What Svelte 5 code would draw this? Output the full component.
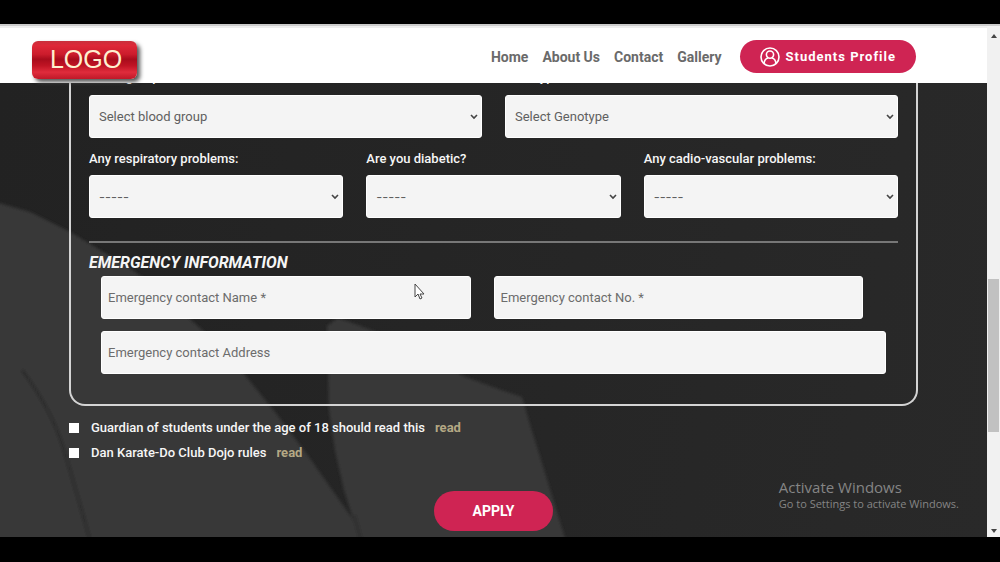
<script>
  const nav = ['Home', 'About Us', 'Contact', 'Gallery'];
  const medical = [
    { id: 'respiratory', label: 'Any respiratory problems:' },
    { id: 'diabetic', label: 'Are you diabetic?' },
    { id: 'cardio', label: 'Any cadio-vascular problems:' }
  ];
  const consents = [
    { id: 'guardian', text: 'Guardian of students under the age of 18 should read this' },
    { id: 'rules', text: 'Dan Karate-Do Club Dojo rules' }
  ];
</script>

<div class="screen">
  <div class="window">
    <div class="page">
      <header>
        <a class="logo" href="#home">LOGO</a>
        <nav>
          {#each nav as item}
            <a href="#{item}">{item}</a>
          {/each}
          <a class="profile" href="#profile">
            <svg viewBox="0 0 20 20" width="20" height="20" fill="none" stroke="#fff" stroke-width="1.6">
              <circle cx="10" cy="10" r="9" />
              <circle cx="10" cy="7.6" r="3.6" />
              <path d="M4 16.6c.4-3.400 2-5.200 4-5.600M16 16.600c-.4-3.400-2-5.200-4-5.600" />
            </svg>
            <span>Students Profile</span>
          </a>
        </nav>
      </header>

      <main>
        <svg class="backdrop" viewBox="0 83 987 454" preserveAspectRatio="none" aria-hidden="true">
          <defs>
            <filter id="soft"><feGaussianBlur stdDeviation="1.5" /></filter>
          </defs>
          <g filter="url(#soft)">
            <path fill="#383838" d="M-5 202 30 212 70 232 128 267 165 293 193 322 225 350 253 385 275 412 306 453 354 521 362 545H-5z" />
            <path fill="#383838" d="M327 326 338 318 355 324 410 345 463 376 498 389 522 397 530 425 541 460 567 545H361L354 521 344 490 335 450 329 410z" />
            <path fill="none" stroke="#2f2f2f" stroke-width="4" d="M22 370Q52 410 64 450T90 540" />
            <path fill="none" stroke="#303030" stroke-width="5" d="M354 515 361 540" />
          </g>
        </svg>

        <form onsubmit={(e) => e.preventDefault()}>
          <div class="card">
            <div class="cols two">
              <div class="field first">
                <label for="blood">Blood group:</label>
                <select id="blood"><option>Select blood group</option></select>
              </div>
              <div class="field first">
                <label for="genotype">Genotype:</label>
                <select id="genotype"><option>Select Genotype</option></select>
              </div>
            </div>
            <div class="cols three">
              {#each medical as m}
                <div class="field">
                  <label for={m.id}>{m.label}</label>
                  <select id={m.id} class="unset"><option>-----</option></select>
                </div>
              {/each}
            </div>
            <hr />
            <h2>EMERGENCY INFORMATION</h2>
            <div class="emergency">
              <div class="cols two contact">
                <input type="text" aria-label="Emergency contact Name" placeholder="Emergency contact Name *" />
                <input type="tel" aria-label="Emergency contact No." placeholder="Emergency contact No. *" />
              </div>
              <input type="text" aria-label="Emergency contact Address" placeholder="Emergency contact Address" />
            </div>
          </div>

          <div class="consents">
            {#each consents as c}
              <div class="consent">
                <input type="checkbox" id={c.id} />
                <label for={c.id}>{c.text}</label>
                <a href="#{c.id}">read</a>
              </div>
            {/each}
          </div>
          <button type="submit">APPLY</button>
        </form>
      </main>
    </div>

    <div class="scrollbar" aria-hidden="true">
      <svg viewBox="0 0 8 4" width="8" height="4"><path fill="#444" d="M1 4 4 0l3 4z" /></svg>
      <div class="track"><div class="thumb"></div></div>
      <svg viewBox="0 0 8 4" width="8" height="4"><path fill="#444" d="M1 0h6L4 4z" /></svg>
    </div>

    <div class="watermark">
      <p>Activate Windows</p>
      <small>Go to Settings to activate Windows.</small>
    </div>
    <svg class="pointer" viewBox="0 0 12 18" width="12" height="18" aria-hidden="true">
      <path fill="#fff" stroke="#444" d="M1 1v13l3-3 2 5 2-1-2-4h4z" />
    </svg>
  </div>
</div>

<style>
  :global(body) {
    margin: 0;
    background: #000;
  }
  .screen {
    box-sizing: border-box;
    min-height: 100vh;
    padding: 24px 0 25px;
    display: flex;
    background: #000;
    color: #f6f6f6;
    font-family: Roboto, "Open Sans", sans-serif;
    font-size: 13px;
    line-height: 20px;
  }
  .window {
    position: relative;
    flex: 1;
    display: flex;
    border-top: 2px solid #ccc;
    box-sizing: border-box;
  }
  .page {
    flex: 1;
    min-width: 0;
    display: flex;
    flex-direction: column;
  }
  header {
    position: relative;
    z-index: 1;
    box-sizing: border-box;
    height: 57px;
    padding: 2px 71px 0 32px;
    display: flex;
    align-items: center;
    justify-content: space-between;
    background: #fff;
    border-top: 2px solid #eee;
  }
  a {
    text-decoration: none;
  }
  .logo {
    width: 105px;
    height: 38px;
    margin-top: 6px;
    border-radius: 6px;
    background: linear-gradient(#c8303c, #de2838 12%, #cc1c2c 35%, #a80c1c 48%, #c01424 65%, #e02c3c 82%, #c01828);
    box-shadow: 3px 3px 4px #555;
    color: #fff0d0;
    font: 25px/37px "Liberation Sans", sans-serif;
    text-align: center;
    text-indent: 3px;
  }
  nav {
    display: flex;
    align-items: center;
    gap: 14px;
  }
  nav a {
    color: #6a6a6a;
    font-size: 14px;
    font-weight: 700;
  }
  .profile {
    display: flex;
    align-items: center;
    gap: 6px;
    height: 33px;
    margin-left: 4px;
    padding: 0 20px;
    border-radius: 17px;
    background: #cf2453;
    color: #fff;
    font-size: 13px;
    letter-spacing: 1px;
  }
  main {
    position: relative;
    flex: 1;
    overflow: hidden;
    background: linear-gradient(100deg, #222, #292929);
  }
  .backdrop {
    position: absolute;
    inset: 0;
    width: 100%;
    height: 100%;
  }
  form {
    position: relative;
    padding: 0 69px 6px;
    margin-top: -16px;
    display: flex;
    flex-direction: column;
  }
  .card {
    padding: 0 18px 30px;
    border: 2px solid #d4d4d4;
    border-top: 0;
    border-radius: 0 0 16px 16px;
  }
  .cols {
    display: grid;
    gap: 23px;
  }
  .two {
    grid-template-columns: 1fr 1fr;
  }
  .three {
    grid-template-columns: 1fr 1fr 1fr;
    margin-top: 11px;
  }
  .field {
    display: flex;
    flex-direction: column;
    gap: 6px;
  }
  .first {
    gap: 8px;
  }
  label {
    font-weight: 500;
  }
  select,
  input:not([type="checkbox"]) {
    box-sizing: border-box;
    width: 100%;
    height: 43px;
    padding: 0 6px;
    border: 1px solid #fff;
    border-radius: 3px;
    background: #f4f4f4;
    color: #606060;
    font: 13px Roboto, "Open Sans", sans-serif;
  }
  select {
    appearance: none;
    padding: 0 20px 0 9px;
    background: #f4f4f4 url("data:image/svg+xml,%3Csvg xmlns='http://www.w3.org/2000/svg' width='8' height='6' fill='none' stroke='%23444' stroke-width='1.600'%3E%3Cpath d='M1 1l3 3 3-3'/%3E%3C/svg%3E") no-repeat right 3px center;
  }
  select.unset {
    font-family: Inter, sans-serif;
  }
  input::placeholder {
    color: #6c6c6c;
  }
  hr {
    margin: 23px 0 10px;
    border: 0;
    border-top: 2px solid #777;
  }
  h2 {
    margin: 0 0 3px;
    font-size: 16px;
    line-height: 20px;
    font-style: italic;
    font-weight: 700;
  }
  .emergency {
    display: flex;
    flex-direction: column;
    gap: 12px;
    padding: 0 12px;
  }
  .contact {
    padding-right: 23px;
  }
  .consents {
    display: flex;
    flex-direction: column;
    gap: 5px;
    margin: 12px 0 28px;
  }
  .consent {
    display: flex;
    align-items: center;
  }
  .consent input {
    appearance: none;
    width: 10px;
    height: 10px;
    margin: 0 12px 0 0;
    background: #fff;
  }
  .consent a {
    margin-left: 10px;
    color: #b4a884;
    font-weight: 700;
  }
  button {
    align-self: center;
    width: 119px;
    height: 40px;
    border: 0;
    border-radius: 20px;
    background: #cf2453;
    color: #fff;
    font: 700 14px Roboto, "Open Sans", sans-serif;
  }
  .scrollbar {
    width: 13px;
    box-sizing: border-box;
    padding: 8px 0 4px;
    display: flex;
    flex-direction: column;
    align-items: center;
    gap: 6px;
    background: #f1f1f1;
  }
  .track {
    flex: 1;
    width: 11px;
    display: grid;
    grid-template-rows: 49% 32% 1fr;
  }
  .thumb {
    grid-row: 2;
    background: #c1c1c1;
  }
  .watermark {
    position: absolute;
    right: 41px;
    bottom: 25px;
    color: #858585;
    font-family: "Open Sans", sans-serif;
  }
  .watermark p {
    margin: 0;
    font-size: 15px;
    line-height: 18px;
  }
  .watermark small {
    display: block;
    font-size: 11px;
    line-height: 16px;
  }
  .pointer {
    position: absolute;
    left: 414px;
    top: 257px;
  }
</style>
